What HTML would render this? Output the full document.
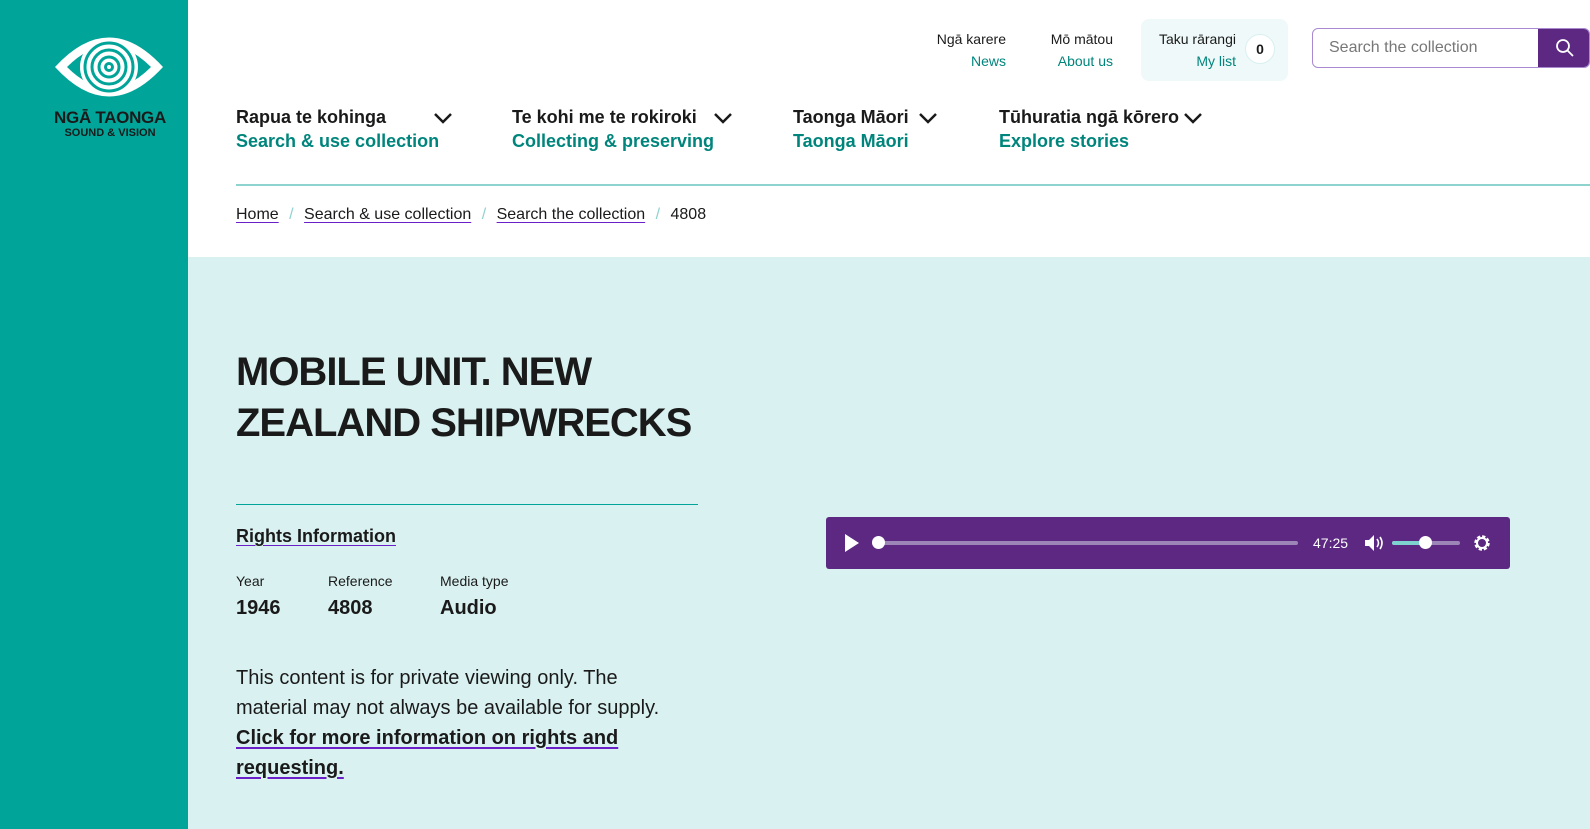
<!DOCTYPE html>
<html><head><meta charset="utf-8"><style>
*{margin:0;padding:0;box-sizing:border-box}
body{width:1590px;height:829px;overflow:hidden;font-family:"Liberation Sans",sans-serif;color:#1a1a1a;background:#fff;position:relative}
.side{position:absolute;left:0;top:0;width:188px;height:829px;background:#00a499}
.abs{position:absolute}
.t{color:#1a1a1a;font-size:14px;white-space:nowrap}
.g{color:#00857c;font-size:14px;white-space:nowrap}
.nav b{display:block;font-size:18px;color:#1a1a1a;white-space:nowrap}
.nav span{display:block;font-size:18px;font-weight:bold;color:#00857c;white-space:nowrap;margin-top:3px}
.u{text-decoration:underline;text-decoration-color:#6a1fc9;text-underline-offset:3px;color:#1a1a1a}
.light{position:absolute;left:188px;top:257px;width:1402px;height:572px;background:#d9f2f1}
</style></head><body>
<div class="side">
<svg class="abs" style="left:54px;top:30px" width="110" height="74" viewBox="0 0 110 74">
<path d="M1 37 Q55 -22 109 37 Q55 96 1 37Z" fill="#fff"/>
<path d="M13 37 Q55 -5 97 37 Q55 79 13 37Z" fill="#00a499"/>
<circle cx="55" cy="37" r="29" fill="#fff"/>
<g fill="none" stroke="#00a499" stroke-width="3">
<circle cx="55" cy="37" r="24"/><circle cx="55" cy="37" r="17"/><circle cx="55" cy="37" r="10"/><circle cx="55" cy="37" r="3.5"/></g>
</svg>
<div class="abs" style="left:0;width:220px;top:108px;text-align:center;font-weight:bold;font-size:17px;color:#1a1a1a;letter-spacing:-0.3px">NGĀ TAONGA</div>
<div class="abs" style="left:0;width:220px;top:127px;text-align:center;font-size:11px;color:#1a1a1a;font-weight:bold">SOUND &amp; VISION</div>
</div>

<div class="abs" style="left:922px;top:31px;text-align:right;width:84px"><div class="t">Ngā karere</div><div class="g" style="margin-top:6px">News</div></div>
<div class="abs" style="left:1035px;top:31px;text-align:right;width:78px"><div class="t">Mō mātou</div><div class="g" style="margin-top:6px">About us</div></div>
<div class="abs" style="left:1141px;top:19px;width:147px;height:62px;background:#eff9f9;border-radius:8px">
<div class="abs" style="left:8px;top:12px;text-align:right;width:87px"><div class="t">Taku rārangi</div><div class="g" style="margin-top:6px">My list</div></div>
<div class="abs" style="left:104px;top:15px;width:30px;height:30px;border-radius:50%;background:#fff;border:1px solid #d8f0ef;text-align:center;line-height:28px;font-weight:bold;font-size:14px">0</div>
</div>
<div class="abs" style="left:1312px;top:28px;width:278px;height:40px;border:1px solid #a98ad0;border-radius:6px;overflow:hidden">
<div class="abs" style="left:16px;top:10px;font-size:16px;color:#777">Search the collection</div>
<div class="abs" style="left:225px;top:-1px;width:53px;height:40px;background:#5c2882">
<svg class="abs" style="left:17px;top:10px" width="20" height="20" viewBox="0 0 20 20"><circle cx="8" cy="8" r="6" fill="none" stroke="#fff" stroke-width="1.8"/><path d="M12.5 12.5L18 18" stroke="#fff" stroke-width="1.8"/></svg></div>
</div>

<div class="nav">
<div class="abs" style="left:236px;top:107px"><b>Rapua te kohinga</b><span>Search &amp; use collection</span></div>
<div class="abs" style="left:512px;top:107px"><b>Te kohi me te rokiroki</b><span>Collecting &amp; preserving</span></div>
<div class="abs" style="left:793px;top:107px"><b>Taonga Māori</b><span>Taonga Māori</span></div>
<div class="abs" style="left:999px;top:107px"><b>Tūhuratia ngā kōrero</b><span>Explore stories</span></div>
</div>
<svg class="abs" style="left:433px;top:111px" width="20" height="14"><path d="M2 3L10 11L18 3" fill="none" stroke="#1a1a1a" stroke-width="2.5"/></svg>
<svg class="abs" style="left:713px;top:111px" width="20" height="14"><path d="M2 3L10 11L18 3" fill="none" stroke="#1a1a1a" stroke-width="2.5"/></svg>
<svg class="abs" style="left:918px;top:111px" width="20" height="14"><path d="M2 3L10 11L18 3" fill="none" stroke="#1a1a1a" stroke-width="2.5"/></svg>
<svg class="abs" style="left:1183px;top:111px" width="20" height="14"><path d="M2 3L10 11L18 3" fill="none" stroke="#1a1a1a" stroke-width="2.5"/></svg>

<div class="abs" style="left:236px;top:184px;width:1354px;height:2px;background:#8fd3cf"></div>
<div class="abs" style="left:236px;top:206px;font-size:16px;white-space:nowrap"><span class="u">Home</span> <span style="color:#8fd3cf;margin:0 6px">/</span> <span class="u">Search &amp; use collection</span> <span style="color:#8fd3cf;margin:0 6px">/</span> <span class="u">Search the collection</span> <span style="color:#8fd3cf;margin:0 6px">/</span> 4808</div>

<div class="light"></div>
<div class="abs" style="left:236px;top:347px;font-size:40px;font-weight:bold;line-height:51px;letter-spacing:-1px">MOBILE UNIT. NEW<br>ZEALAND SHIPWRECKS</div>
<div class="abs" style="left:236px;top:504px;width:462px;height:1px;background:#00a499"></div>
<div class="abs u" style="left:236px;top:526px;font-size:18px;font-weight:bold">Rights Information</div>
<div class="abs" style="left:236px;top:573px;font-size:14px">Year</div>
<div class="abs" style="left:328px;top:573px;font-size:14px">Reference</div>
<div class="abs" style="left:440px;top:573px;font-size:14px">Media type</div>
<div class="abs" style="left:236px;top:597px;font-size:20px;font-weight:bold">1946</div>
<div class="abs" style="left:328px;top:597px;font-size:20px;font-weight:bold">4808</div>
<div class="abs" style="left:440px;top:597px;font-size:20px;font-weight:bold">Audio</div>
<div class="abs" style="left:236px;top:663px;font-size:20px;line-height:30px;width:440px">This content is for private viewing only. The material may not always be available for supply.<br><span class="u" style="font-weight:bold">Click for more information on rights and requesting.</span></div>

<div class="abs" style="left:826px;top:517px;width:684px;height:52px;background:#5c2882;border-radius:3px">
<svg class="abs" style="left:18px;top:17px" width="16" height="18"><path d="M1 0L15 9L1 18Z" fill="#fff"/></svg>
<div class="abs" style="left:48px;top:24px;width:424px;height:4px;background:#9c86b8;border-radius:2px"></div>
<div class="abs" style="left:46px;top:19px;width:13px;height:13px;border-radius:50%;background:#fff"></div>
<div class="abs" style="left:487px;top:18px;font-size:14px;color:#fff">47:25</div>
<svg class="abs" style="left:538px;top:17px" width="22" height="18"><path d="M1 6H5L10 1V17L5 12H1Z" fill="#fff"/><path d="M13 5Q16 9 13 13M16 3Q20 9 16 15" fill="none" stroke="#fff" stroke-width="1.6"/></svg>
<div class="abs" style="left:566px;top:24px;width:68px;height:4px;background:#9c86b8;border-radius:2px"></div>
<div class="abs" style="left:566px;top:24px;width:34px;height:4px;background:#7fd3ce;border-radius:2px"></div>
<div class="abs" style="left:593px;top:19px;width:13px;height:13px;border-radius:50%;background:#fff"></div>
<svg class="abs" style="left:647px;top:17px" width="18" height="18" viewBox="0 0 18 18"><circle cx="9" cy="9" r="6" fill="none" stroke="#fff" stroke-width="3.5" stroke-dasharray="3 1.7"/><circle cx="9" cy="9" r="5" fill="none" stroke="#fff" stroke-width="2"/></svg>
</div>
</body></html>
